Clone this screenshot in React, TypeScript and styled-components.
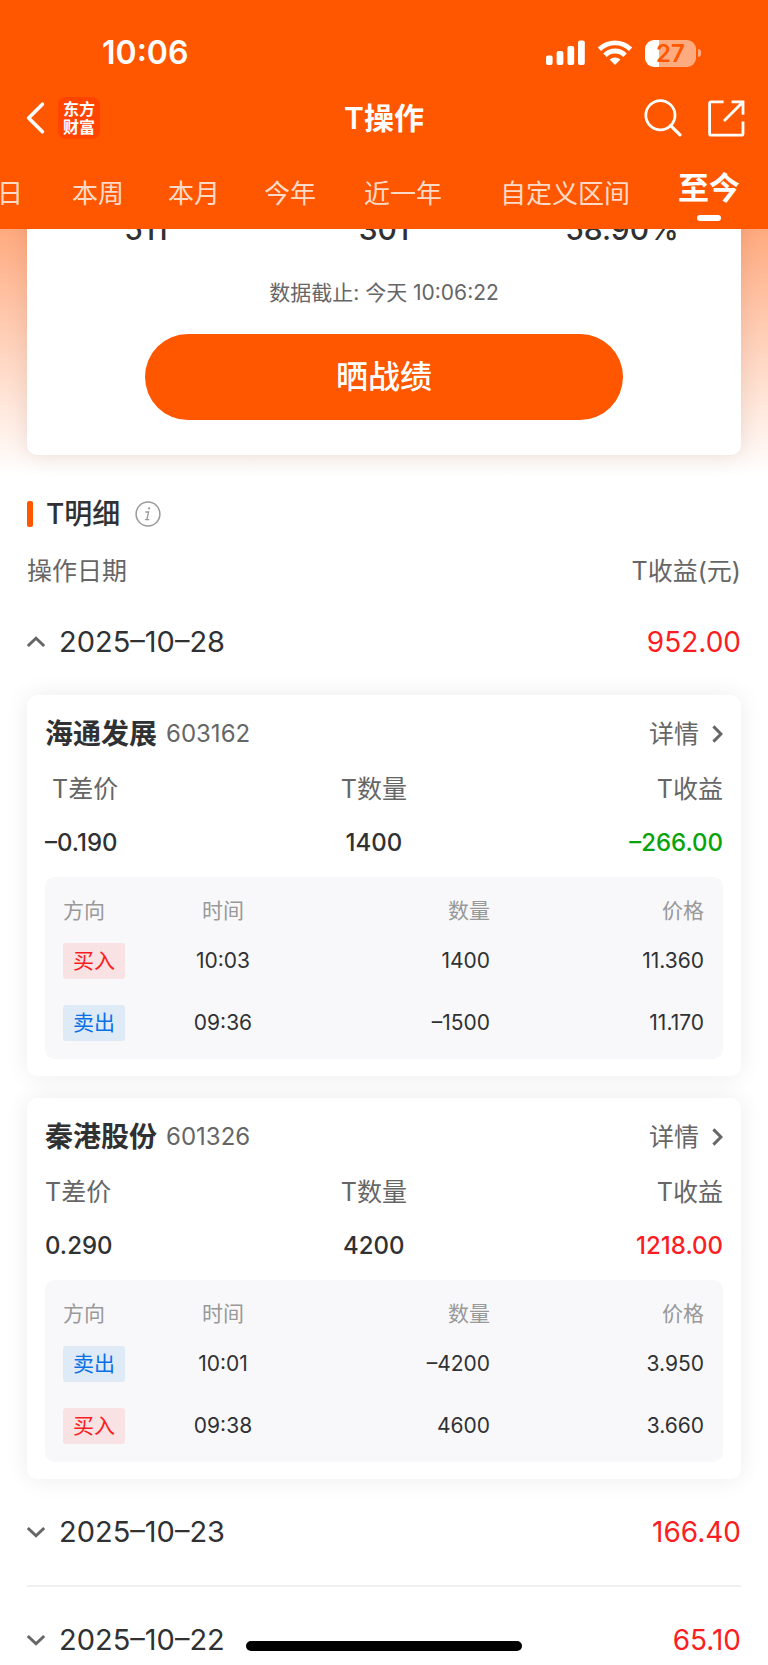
import React, { useState } from "react";
import styled, { createGlobalStyle } from "styled-components";

const color = {
  brand: "#ff5700",
  ink: "#303133",
  text: "#666666",
  muted: "#999999",
  up: "#fb1d22",
  down: "#08a30a",
  line: "#f0f0f0",
};

const GlobalStyle = createGlobalStyle`
  *, *::before, *::after { box-sizing: border-box; }
  body {
    margin: 0;
    background: #ffffff;
    color: ${color.ink};
    font-family: Inter, "Noto Sans CJK SC", sans-serif;
  }
  button { font-family: inherit; color: inherit; background: none; border: 0; padding: 0; cursor: pointer; }
  a { color: inherit; text-decoration: none; }
  h1, h2, h3, p { margin: 0; }
  svg { display: block; }
`;

const Shell = styled.div`
  height: 100vh;
  display: flex;
  flex-direction: column;
  overflow: hidden;
`;

const Header = styled.header`
  flex: none;
  padding-top: 33px;
  background: ${color.brand};
  color: #ffffff;
`;

const StatusBar = styled.div`
  display: flex;
  align-items: center;
  justify-content: space-between;
  height: 40px;
  padding: 0 67px 0 102px;
`;

const Clock = styled.time`
  font-size: 32px;
  line-height: 40px;
  font-weight: 600;
`;

const StatusIcons = styled.div`
  display: flex;
  align-items: center;
  gap: 13px;
`;

const NavBar = styled.div`
  display: grid;
  grid-template-columns: 1fr auto 1fr;
  align-items: center;
  height: 90px;
  padding: 0 23px;
`;

const NavSide = styled.div<{ $end?: boolean; $gap: number }>`
  display: flex;
  align-items: center;
  justify-content: ${(p) => (p.$end ? "flex-end" : "flex-start")};
  gap: ${(p) => p.$gap}px;
`;

const Logo = styled.a`
  display: grid;
  place-content: center;
  width: 42px;
  height: 42px;
  border-radius: 8px;
  background: #ff4400;
  font-size: 16px;
  line-height: 18px;
  font-weight: 700;
  text-align: center;
`;

const NavTitle = styled.h1`
  font-size: 30px;
  line-height: 40px;
  font-weight: 600;
`;

const Tabs = styled.nav`
  display: flex;
  justify-content: flex-end;
  height: 66px;
  padding-right: 12px;
  overflow: hidden;
`;

const Tab = styled.button<{ $width: number; $active?: boolean }>`
  position: relative;
  flex: none;
  width: ${(p) => p.$width}px;
  padding-bottom: ${(p) => (p.$active ? 22 : 10)}px;
  font-size: ${(p) => (p.$active ? 31 : 26)}px;
  font-weight: ${(p) => (p.$active ? 600 : 400)};
  color: ${(p) => (p.$active ? "#ffffff" : "rgba(255, 255, 255, 0.8)")};

  &::after {
    content: "";
    display: ${(p) => (p.$active ? "block" : "none")};
    position: absolute;
    left: 50%;
    bottom: 8px;
    width: 24px;
    height: 6px;
    margin-left: -12px;
    border-radius: 3px;
    background: #ffffff;
  }
`;

const Main = styled.main`
  flex: 1;
  min-height: 0;
  overflow-y: auto;
  scrollbar-width: none;
`;

const Hero = styled.section`
  margin-top: -20px;
  padding: 0 27px 20px;
  background: linear-gradient(#ffa374, #ffffff);
`;

const HeroCard = styled.div`
  display: flex;
  flex-direction: column;
  align-items: center;
  padding-bottom: 35px;
  border-radius: 0 0 10px 10px;
  background: #ffffff;
  box-shadow: 0 2px 22px rgba(60, 20, 0, 0.1);
`;

const Stats = styled.div`
  display: grid;
  grid-template-columns: repeat(3, 1fr);
  width: 100%;
  font-size: 30px;
  line-height: 40px;
  font-weight: 500;
  text-align: center;
`;

const UpdatedAt = styled.p`
  margin: 29px 0 26px;
  font-size: 21px;
  line-height: 30px;
  color: ${color.text};
`;

const ShareButton = styled.button`
  width: 67%;
  height: 86px;
  border-radius: 43px;
  background: ${color.brand};
  color: #ffffff;
  font-size: 32px;
  line-height: 40px;
  font-weight: 500;
`;

const Details = styled.section`
  padding: 19px 27px 0;
`;

const SectionTitle = styled.div`
  display: flex;
  align-items: center;
  height: 40px;
`;

const Accent = styled.span`
  width: 6px;
  height: 26px;
  margin-right: 13px;
  border-radius: 2px;
  background: ${color.brand};
`;

const Heading = styled.h2`
  margin-right: 15px;
  font-size: 28px;
  line-height: 40px;
  font-weight: 500;
`;

const ColumnLabels = styled.div`
  display: flex;
  justify-content: space-between;
  margin-top: 19px;
  font-size: 25px;
  line-height: 36px;
  color: ${color.text};
`;

const Day = styled.div`
  & + & { border-top: 2px solid ${color.line}; }
`;

const DayRow = styled.button`
  display: flex;
  align-items: center;
  width: 100%;
  height: 106px;
  font-size: 28px;
  line-height: 36px;
  text-align: left;
`;

const DayDate = styled.span`
  flex: 1;
  margin-left: 13px;
  font-size: 29px;
`;

const DayProfit = styled.span`
  color: ${color.up};
`;

const Trades = styled.div`
  display: grid;
  gap: 22px;
`;

const Card = styled.article`
  padding: 15px 18px 17px;
  border-radius: 10px;
  background: #ffffff;
  box-shadow: 0 0 24px rgba(0, 0, 0, 0.08);
`;

const CardHead = styled.div`
  display: flex;
  align-items: center;
  height: 48px;
  margin-bottom: 5px;
`;

const StockName = styled.h3`
  font-size: 28px;
  line-height: 40px;
  font-weight: 600;
`;

const StockCode = styled.span`
  flex: 1;
  margin-left: 9px;
  font-size: 24px;
  line-height: 40px;
  color: ${color.text};
`;

const DetailLink = styled.a`
  display: flex;
  align-items: center;
  gap: 13px;
  font-size: 25px;
  line-height: 40px;
  color: ${color.text};
`;

const Summary = styled.table`
  width: 100%;
  margin-bottom: 6px;
  table-layout: fixed;
  border-collapse: collapse;
  font-size: 25px;
  line-height: 36px;
  text-align: center;

  th, td { padding: 0; }
  th { height: 52px; font-weight: 400; color: ${color.text}; }
  td { height: 56px; font-size: 24px; font-weight: 500; }
  th:nth-child(1), td:nth-child(1) { width: 32%; text-align: left; }
  th:nth-child(2), td:nth-child(2) { width: 33%; }
  th:nth-child(3), td:nth-child(3) { text-align: right; }
`;

const Profit = styled.td<{ $loss: boolean }>`
  color: ${(p) => (p.$loss ? color.down : color.up)};
`;

const Panel = styled.div`
  padding: 15px 19px 5px 18px;
  border-radius: 10px;
  background: #f8f8fa;
`;

const Orders = styled.table`
  width: 100%;
  table-layout: fixed;
  border-collapse: collapse;
  font-size: 21px;
  line-height: 30px;
  text-align: right;

  th { height: 38px; padding: 0; font-weight: 400; color: ${color.muted}; }
  td { height: 62px; padding: 0; }
  th:nth-child(1), td:nth-child(1) { width: 96px; text-align: left; }
  th:nth-child(2), td:nth-child(2) { width: 128px; text-align: center; }
  th:nth-child(3), td:nth-child(3) { width: 203px; }
`;

const SideTag = styled.span<{ $buy: boolean }>`
  display: block;
  width: 62px;
  border-radius: 3px;
  line-height: 36px;
  text-align: center;
  background: ${(p) => (p.$buy ? "#f8e2e3" : "#deeaf6")};
  color: ${(p) => (p.$buy ? color.up : "#0a70e8")};
`;

const HomeIndicator = styled.div`
  position: fixed;
  left: 32%;
  right: 32%;
  bottom: 14px;
  height: 10px;
  border-radius: 5px;
  background: #000000;
`;

const SignalIcon = () => (
  <svg width="39" height="26" viewBox="0 0 39 26" fill="#fff" aria-hidden="true">
    <rect x="0" y="15.5" width="6.6" height="9.5" rx="2" />
    <rect x="10.6" y="11" width="6.8" height="14" rx="2" />
    <rect x="21.4" y="6" width="6.8" height="19" rx="2" />
    <rect x="32" y="0.5" width="6.8" height="24.5" rx="2" />
  </svg>
);

const WifiIcon = () => (
  <svg width="34" height="26" viewBox="0 0 34 26" aria-hidden="true">
    <g fill="none" stroke="#fff" strokeWidth="4.8">
      <path d="M1.4 9.2a22.4 22.4 0 0 1 31.2 0" />
      <path d="M7 15.2a14 14 0 0 1 20 0" />
    </g>
    <path d="M11.6 19.6a7.8 7.8 0 0 1 10.8 0L17 25z" fill="#fff" />
  </svg>
);

const Battery = styled.div`
  display: flex;
  align-items: center;
  gap: 2px;
`;

const BatteryBody = styled.div`
  width: 51px;
  height: 27px;
  border-radius: 9px;
  background: linear-gradient(90deg, #ffffff 27%, #ffab80 27%);
  color: ${color.brand};
  font-size: 24px;
  line-height: 27px;
  font-weight: 600;
  text-align: center;
`;

const BatteryCap = styled.div`
  width: 3px;
  height: 8px;
  border-radius: 0 4px 4px 0;
  background: #ffab80;
`;

const BackIcon = () => (
  <svg width="22" height="34" viewBox="0 0 22 34" fill="none" stroke="#fff" strokeWidth="3.6" strokeLinecap="round" strokeLinejoin="round" aria-hidden="true">
    <path d="M19.4 3.2 5.6 17l13.8 13.8" />
  </svg>
);

const SearchIcon = () => (
  <svg width="38" height="38" viewBox="0 0 38 38" fill="none" stroke="#fff" strokeWidth="2.8" strokeLinecap="round" aria-hidden="true">
    <circle cx="16.4" cy="16.2" r="14.6" />
    <path d="M26.6 26.6l9.4 9.2" strokeWidth="3.2" />
  </svg>
);

const OpenIcon = () => (
  <svg width="37" height="37" viewBox="0 0 37 37" fill="none" stroke="#fff" strokeWidth="2.8" aria-hidden="true">
    <path d="M15.6 1.8H3a1.4 1.4 0 0 0-1.4 1.4v30.6A1.4 1.4 0 0 0 3 35.2h30.6a1.4 1.4 0 0 0 1.4-1.4V21.4" />
    <path d="M23.6 1.8H35v13M34.4 2.4 16 21" />
  </svg>
);

const InfoIcon = () => (
  <svg width="26" height="26" viewBox="0 0 26 26" fill="none" stroke="#999" strokeWidth="1.5" aria-hidden="true">
    <circle cx="13" cy="13" r="11.9" />
    <path d="M10.4 11h3.2l-1.8 7.6h2.4M10 18.6h2" strokeWidth="1.3" />
    <circle cx="14.1" cy="7.4" r="1.1" fill="#999" stroke="none" />
  </svg>
);

const chevrons = {
  up: "M.8 13 9 5.2l8.2 7.8",
  down: "M.8 5 9 12.8 17.2 5",
};

const FoldIcon = ({ open }: { open: boolean }) => (
  <svg width="19" height="18" viewBox="0 0 19 18" fill="none" stroke="#666" strokeWidth="3" aria-hidden="true">
    <path d={open ? chevrons.up : chevrons.down} />
  </svg>
);

const MoreIcon = () => (
  <svg width="11" height="18" viewBox="0 0 11 18" fill="none" stroke="#666" strokeWidth="3" aria-hidden="true">
    <path d="M1.4 1.4 9 9l-7.6 7.6" />
  </svg>
);

type Order = { side: "买入" | "卖出"; time: string; qty: string; price: string };
type Trade = {
  name: string;
  code: string;
  diffLabel: string;
  diff: string;
  qty: string;
  profit: string;
  orders: Order[];
};
type DayRecord = { date: string; profit: string; trades: Trade[] };

const tabs = [
  { label: "今日", width: 106 },
  { label: "本周", width: 96 },
  { label: "本月", width: 96 },
  { label: "今年", width: 96 },
  { label: "近一年", width: 130 },
  { label: "自定义区间", width: 194 },
  { label: "至今", width: 94 },
];

const days: DayRecord[] = [
  {
    date: "2025–10–28",
    profit: "952.00",
    trades: [
      {
        name: "海通发展",
        code: "603162",
        diffLabel: "\u00a0T差价",
        diff: "–0.190",
        qty: "1400",
        profit: "–266.00",
        orders: [
          { side: "买入", time: "10:03", qty: "1400", price: "11.360" },
          { side: "卖出", time: "09:36", qty: "–1500", price: "11.170" },
        ],
      },
      {
        name: "秦港股份",
        code: "601326",
        diffLabel: "T差价",
        diff: "0.290",
        qty: "4200",
        profit: "1218.00",
        orders: [
          { side: "卖出", time: "10:01", qty: "–4200", price: "3.950" },
          { side: "买入", time: "09:38", qty: "4600", price: "3.660" },
        ],
      },
    ],
  },
  { date: "2025–10–23", profit: "166.40", trades: [] },
  { date: "2025–10–22", profit: "65.10", trades: [] },
];

const TradeCard = ({ trade }: { trade: Trade }) => (
  <Card>
    <CardHead>
      <StockName>{trade.name}</StockName>
      <StockCode>{trade.code}</StockCode>
      <DetailLink href="#detail">
        详情
        <MoreIcon />
      </DetailLink>
    </CardHead>
    <Summary>
      <thead>
        <tr>
          <th scope="col">{trade.diffLabel}</th>
          <th scope="col">T数量</th>
          <th scope="col">T收益</th>
        </tr>
      </thead>
      <tbody>
        <tr>
          <td>{trade.diff}</td>
          <td>{trade.qty}</td>
          <Profit $loss={trade.profit.startsWith("–")}>{trade.profit}</Profit>
        </tr>
      </tbody>
    </Summary>
    <Panel>
      <Orders>
        <thead>
          <tr>
            <th scope="col">方向</th>
            <th scope="col">时间</th>
            <th scope="col">数量</th>
            <th scope="col">价格</th>
          </tr>
        </thead>
        <tbody>
          {trade.orders.map((order) => (
            <tr key={order.time}>
              <td>
                <SideTag $buy={order.side === "买入"}>{order.side}</SideTag>
              </td>
              <td>{order.time}</td>
              <td>{order.qty}</td>
              <td>{order.price}</td>
            </tr>
          ))}
        </tbody>
      </Orders>
    </Panel>
  </Card>
);

export default function App() {
  const [activeTab, setActiveTab] = useState("至今");
  const [openDay, setOpenDay] = useState("2025–10–28");

  return (
    <Shell>
      <GlobalStyle />
      <Header>
        <StatusBar>
          <Clock>10:06</Clock>
          <StatusIcons>
            <SignalIcon />
            <WifiIcon />
            <Battery>
              <BatteryBody>27</BatteryBody>
              <BatteryCap />
            </Battery>
          </StatusIcons>
        </StatusBar>
        <NavBar>
          <NavSide $gap={13}>
            <button type="button" aria-label="返回">
              <BackIcon />
            </button>
            <Logo href="#home">
              <span>东方</span>
              <span>财富</span>
            </Logo>
          </NavSide>
          <NavTitle>T操作</NavTitle>
          <NavSide $end $gap={26}>
            <button type="button" aria-label="搜索">
              <SearchIcon />
            </button>
            <button type="button" aria-label="分享">
              <OpenIcon />
            </button>
          </NavSide>
        </NavBar>
        <Tabs>
          {tabs.map((tab) => (
            <Tab
              key={tab.label}
              type="button"
              $width={tab.width}
              $active={tab.label === activeTab}
              onClick={() => setActiveTab(tab.label)}
            >
              {tab.label}
            </Tab>
          ))}
        </Tabs>
      </Header>
      <Main>
        <Hero>
          <HeroCard>
            <Stats>
              <span>511</span>
              <span>301</span>
              <span>58.90%</span>
            </Stats>
            <UpdatedAt>数据截止: 今天 10:06:22</UpdatedAt>
            <ShareButton type="button">晒战绩</ShareButton>
          </HeroCard>
        </Hero>
        <Details>
          <SectionTitle>
            <Accent />
            <Heading>T明细</Heading>
            <button type="button" aria-label="说明">
              <InfoIcon />
            </button>
          </SectionTitle>
          <ColumnLabels>
            <span>操作日期</span>
            <span>T收益(元)</span>
          </ColumnLabels>
          {days.map((day) => {
            const open = day.date === openDay;
            return (
              <React.Fragment key={day.date}>
                <Day>
                  <DayRow type="button" aria-expanded={open} onClick={() => setOpenDay(open ? "" : day.date)}>
                    <FoldIcon open={open} />
                    <DayDate>{day.date}</DayDate>
                    <DayProfit>{day.profit}</DayProfit>
                  </DayRow>
                </Day>
                {open && day.trades.length > 0 && (
                  <Trades>
                    {day.trades.map((trade) => (
                      <TradeCard key={trade.code} trade={trade} />
                    ))}
                  </Trades>
                )}
              </React.Fragment>
            );
          })}
        </Details>
      </Main>
      <HomeIndicator />
    </Shell>
  );
}
